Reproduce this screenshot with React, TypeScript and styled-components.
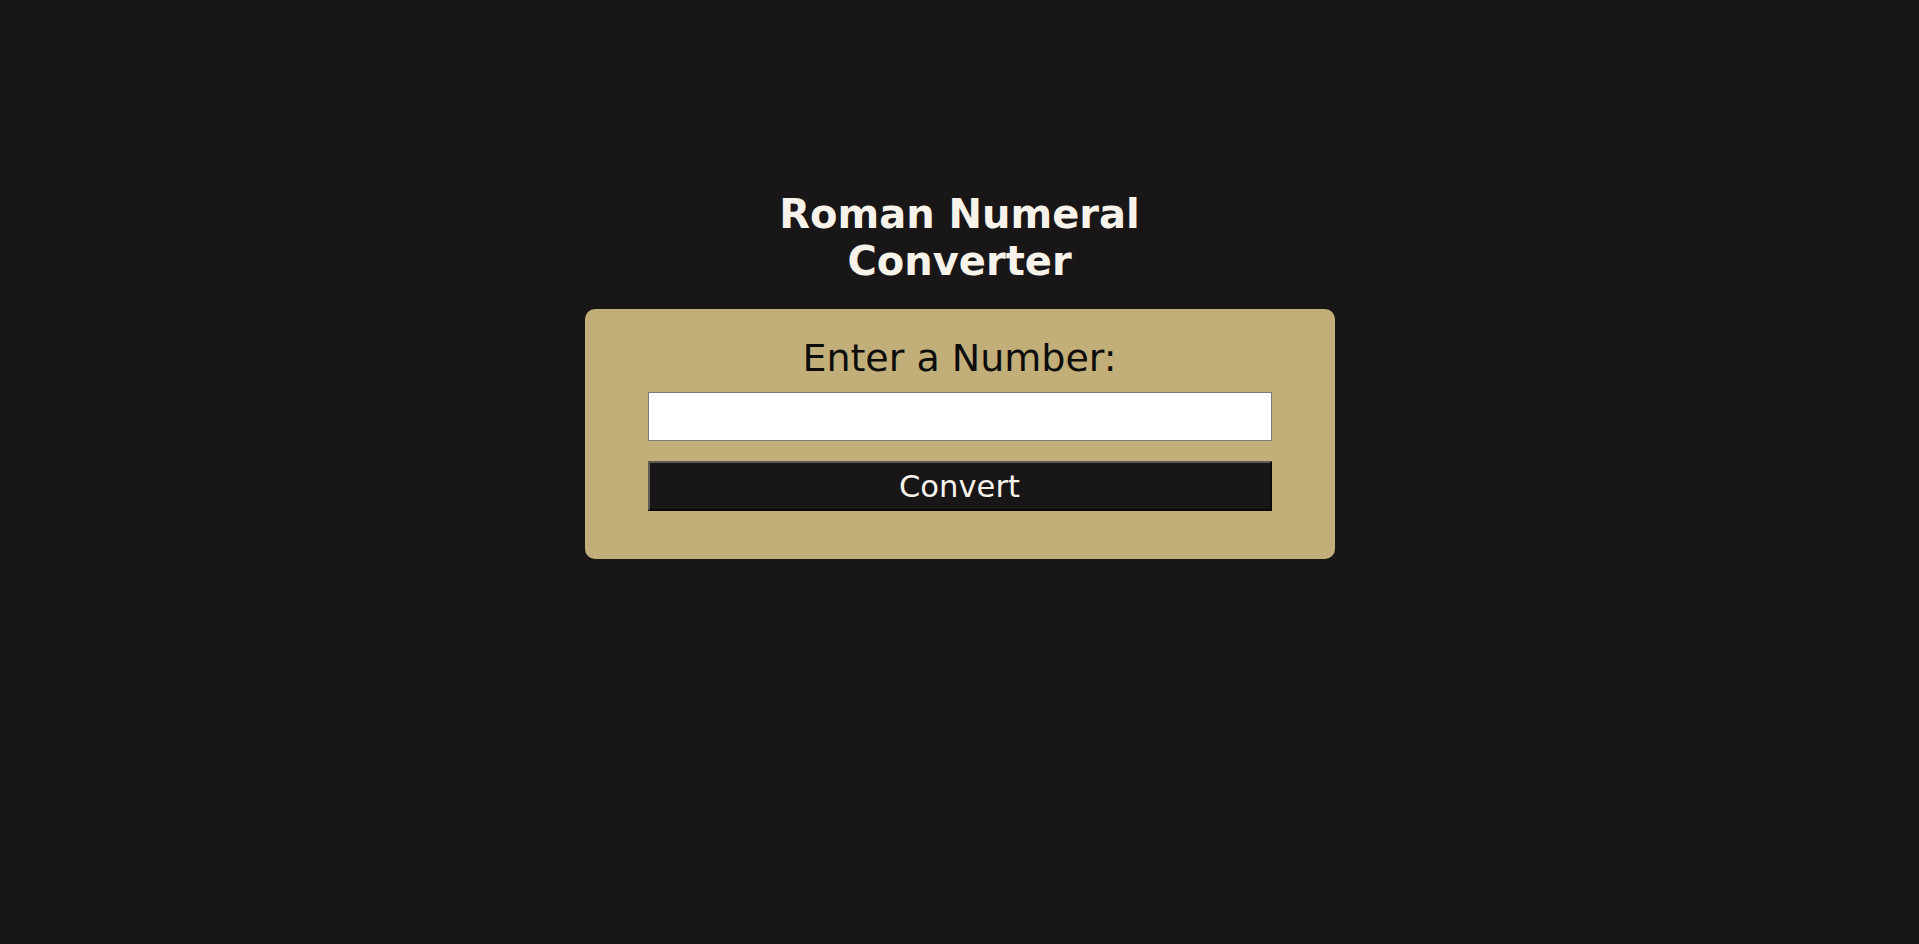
import React from "react";
import styled, { createGlobalStyle } from "styled-components";

const GlobalStyle = createGlobalStyle`
  html, body {
    margin: 0;
    padding: 0;
    background: #181617;
  }
  body {
    font-family: "DejaVu Sans", Verdana, sans-serif;
  }
  * { box-sizing: border-box; }
`;

const Page = styled.main`
  min-height: 944px;
  display: flex;
  flex-direction: column;
  align-items: center;
  padding-top: 191px;
  background: #181617;
`;

const Title = styled.h1`
  margin: 0 0 25px;
  max-width: 420px;
  text-align: center;
  font-family: "DejaVu Sans", Verdana, sans-serif;
  font-weight: bold;
  font-size: 40px;
  line-height: 46.5px;
  color: #f7f3ea;
`;

const Card = styled.form`
  width: 750px;
  padding: 27px 63px 48px;
  background: #c2ae79;
  border-radius: 10px;
  display: flex;
  flex-direction: column;
  align-items: stretch;
`;

const Label = styled.label`
  text-align: center;
  font-family: "DejaVu Sans", Verdana, sans-serif;
  font-size: 38px;
  line-height: 44px;
  color: #0d0c0c;
  margin-bottom: 12px;
`;

const Input = styled.input`
  width: 100%;
  height: 49px;
  background: #ffffff;
  border: 1px solid #7d7a74;
  font-size: 24px;
  padding: 0 8px;
  margin: 0 0 20px;
  outline: none;
`;

const Button = styled.button`
  width: 100%;
  height: 50px;
  margin: 0;
  padding: 0;
  background: #181617;
  color: #f7f3ea;
  font-family: "DejaVu Sans", Verdana, sans-serif;
  font-size: 30.6px;
  border-style: solid;
  border-width: 2px;
  border-color: #5f5b52 #0a0909 #0a0909 #5f5b52;
  cursor: pointer;
`;

export default function App() {
  return (
    <>
      <GlobalStyle />
      <Page>
        <Title>Roman Numeral Converter</Title>
        <Card onSubmit={(e) => e.preventDefault()}>
          <Label htmlFor="number">Enter a Number:</Label>
          <Input id="number" type="number" />
          <Button type="submit">Convert</Button>
        </Card>
      </Page>
    </>
  );
}
